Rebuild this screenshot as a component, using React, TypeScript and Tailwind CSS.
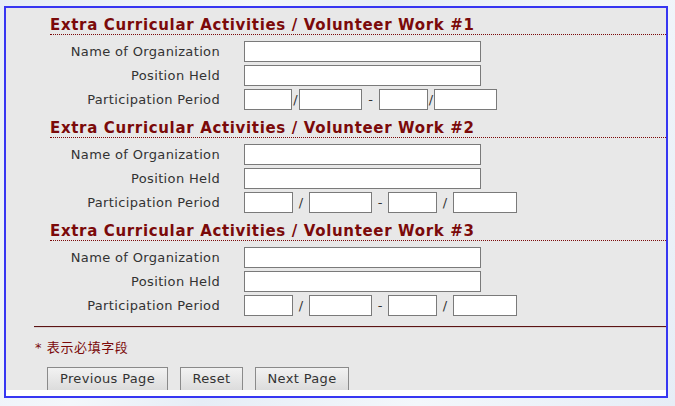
import React from 'react';

interface Section {
  num: number;
  tight: boolean;
}

const sections: Section[] = [
  { num: 1, tight: true },
  { num: 2, tight: false },
  { num: 3, tight: false },
];

const font = { fontFamily: '"DejaVu Sans", Verdana, "Noto Sans CJK SC", sans-serif' };

const TextBox = ({ className = '' }: { className?: string }) => (
  <div className={`h-[21px] bg-white border border-[#7a7a7a] shrink-0 ${className}`} />
);

const Row = ({ label, children }: { label: string; children: React.ReactNode }) => (
  <div className="flex items-start h-[24px]">
    <div className="w-[170px] text-right text-[13px] tracking-[0.35px] leading-[21px] text-[#333]">{label}</div>
    <div className="ml-[24px] flex items-start">{children}</div>
  </div>
);

const Sep = ({ ch, w }: { ch: string; w: string }) => (
  <span className={`${w} text-center text-[13px] leading-[21px] text-[#333] shrink-0`}>{ch}</span>
);

const ActivitySection = ({ num, tight }: Section) => (
  <div className="ml-[44px] mb-[6px]">
    <h3 className="h-[19px] text-[15px] tracking-[0.66px] leading-[18px] font-bold text-[#7b0a0a] border-b border-dotted border-[#7b0a0a]">
      Extra Curricular Activities / Volunteer Work #{num}
    </h3>
    <div className="mt-[6px]">
      <Row label="Name of Organization">
        <TextBox className="w-[237px]" />
      </Row>
      <Row label="Position Held">
        <TextBox className="w-[237px]" />
      </Row>
      <Row label="Participation Period">
        {tight ? (
          <>
            <TextBox className="w-[48px]" />
            <Sep ch="/" w="w-[7px]" />
            <TextBox className="w-[63px]" />
            <Sep ch="-" w="w-[17px]" />
            <TextBox className="w-[49px]" />
            <Sep ch="/" w="w-[6px]" />
            <TextBox className="w-[63px]" />
          </>
        ) : (
          <>
            <TextBox className="w-[49px]" />
            <Sep ch="/" w="w-[16px]" />
            <TextBox className="w-[63px]" />
            <Sep ch="-" w="w-[16px]" />
            <TextBox className="w-[49px]" />
            <Sep ch="/" w="w-[16px]" />
            <TextBox className="w-[64px]" />
          </>
        )}
      </Row>
    </div>
  </div>
);

const Button = ({ label, width }: { label: string; width: string }) => (
  <button
    className={`${width} h-[24px] shrink-0 border border-[#8a8a8a] bg-gradient-to-b from-[#f2f2f2] to-[#dcdcdc] text-[13px] tracking-[0.35px] text-[#333]`}
    style={font}
  >
    {label}
  </button>
);

export default function App() {
  return (
    <div
      className="w-[675px] h-[406px] overflow-hidden bg-[linear-gradient(115deg,#e6edf6_0%,#f3f7fb_30%,#e6edf6_45%,#f3f7fb_70%,#e6edf6_100%)] pt-[6px] pl-[4px]"
      style={font}
    >
      <div className="w-[664px] h-[392px] border-2 border-[#3636f2] bg-white">
        <div className="h-[382px] bg-[#e8e8e8] overflow-hidden pt-[8px]">
          {sections.map((s) => (
            <ActivitySection key={s.num} {...s} />
          ))}
          <div className="ml-[28px] mt-[7px] border-t border-[#5c1414] border-b border-b-[#d8d0d0] h-[2px]" />
          <p className="ml-[29px] mt-[11px] text-[13px] tracking-[0.6px] leading-[17px] text-[#7b0a0a]">* 表示必填字段</p>
          <div className="ml-[41px] mt-[11px] flex gap-[12px]">
            <Button label="Previous Page" width="w-[121px]" />
            <Button label="Reset" width="w-[63px]" />
            <Button label="Next Page" width="w-[94px]" />
          </div>
        </div>
      </div>
    </div>
  );
}
